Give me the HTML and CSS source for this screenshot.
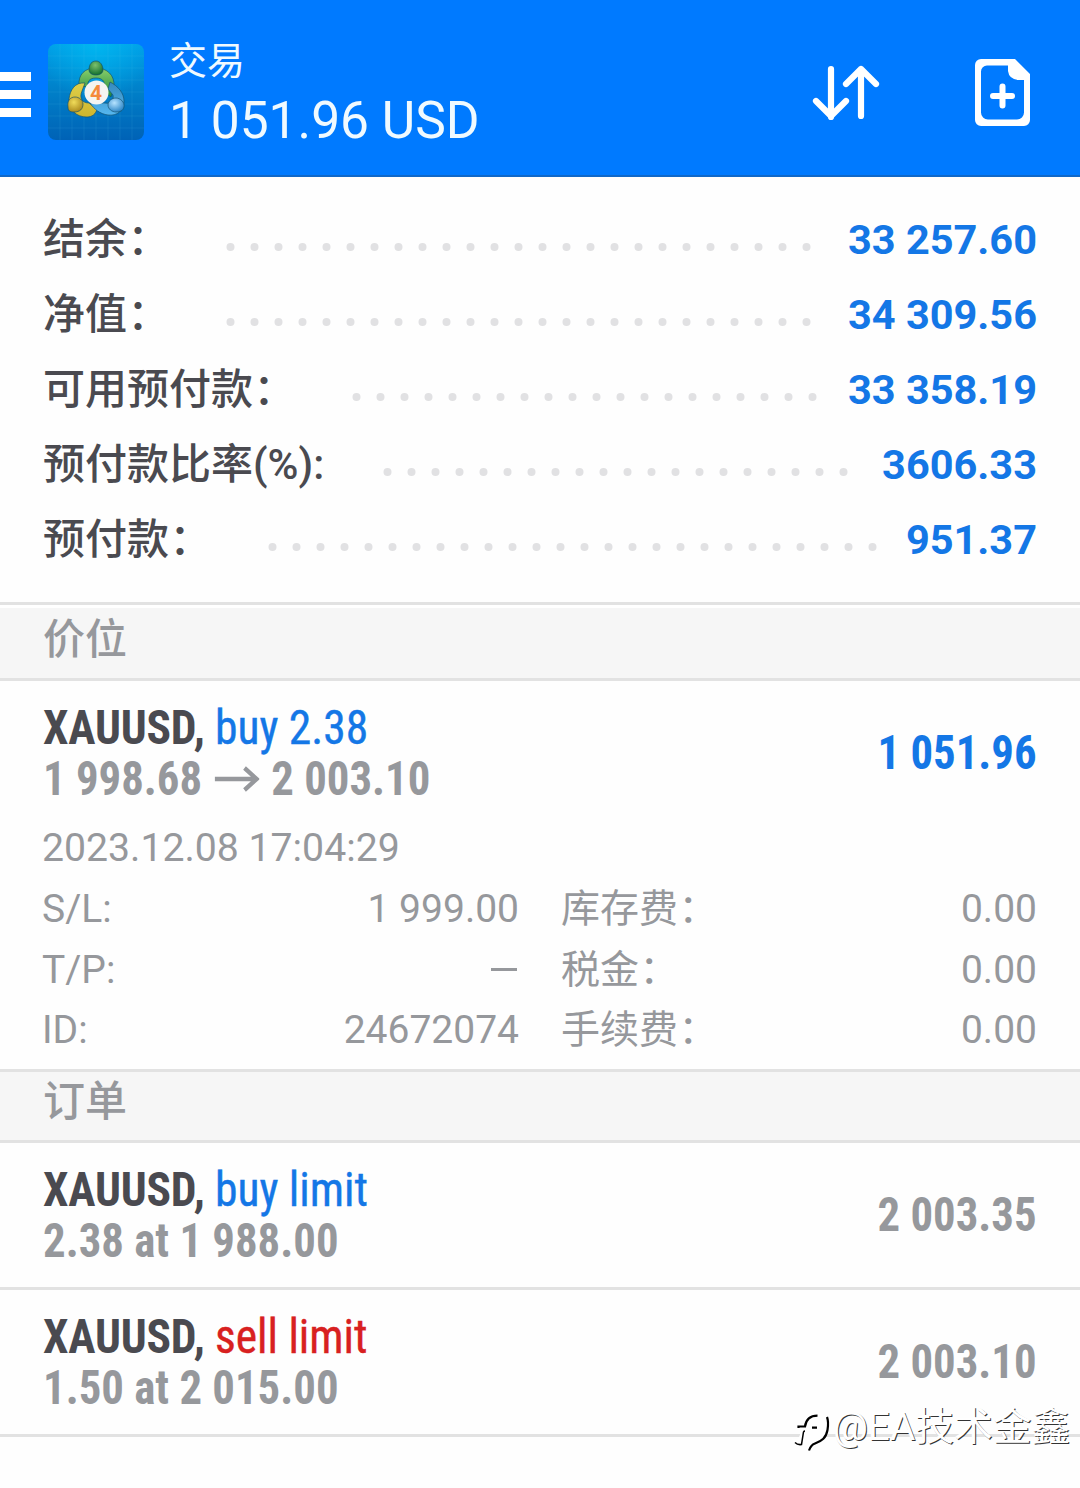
FILE: index.html
```
<!DOCTYPE html>
<html lang="zh-CN">
<head>
<meta charset="utf-8">
<title>交易</title>
<link rel="stylesheet" href="styles.css">
</head>
<body>
<header class="bar">
  <svg class="menu" width="31" height="48" viewBox="0 0 31 48"><path d="M0 0h31v9H0zM0 18h31v9H0zM0 36h31v9H0z" fill="#fff"/></svg>
  <svg class="logo" width="96" height="96" viewBox="0 0 96 96">
    <defs>
      <linearGradient id="bg" x1="0" y1="0" x2="0" y2="1"><stop offset="0" stop-color="#009ee6"/><stop offset=".5" stop-color="#007fc8"/><stop offset="1" stop-color="#0062b6"/></linearGradient>
      <radialGradient id="glow" cx=".5" cy="0" r=".6"><stop offset="0" stop-color="#00c0f5" stop-opacity=".7"/><stop offset="1" stop-color="#00c0f5" stop-opacity="0"/></radialGradient>
      <linearGradient id="gr" x1="0" y1="0" x2="0" y2="1"><stop offset="0" stop-color="#8bd06b"/><stop offset="1" stop-color="#20883c"/></linearGradient>
      <linearGradient id="ye" x1="0" y1="0" x2="0" y2="1"><stop offset="0" stop-color="#ddd04a"/><stop offset="1" stop-color="#d0b52c"/></linearGradient>
      <linearGradient id="bl" x1="0" y1="0" x2="0" y2="1"><stop offset="0" stop-color="#3589bd"/><stop offset="1" stop-color="#55b7f0"/></linearGradient>
      <radialGradient id="gh" cx=".45" cy=".3" r=".7"><stop offset="0" stop-color="#7cc06c"/><stop offset="1" stop-color="#12712f"/></radialGradient>
      <radialGradient id="yh" cx=".4" cy=".35" r=".7"><stop offset="0" stop-color="#f0dc5a"/><stop offset="1" stop-color="#a8861a"/></radialGradient>
      <radialGradient id="bh" cx=".4" cy=".35" r=".7"><stop offset="0" stop-color="#b6e3ff"/><stop offset="1" stop-color="#2581c4"/></radialGradient>
    </defs>
    <rect width="96" height="96" rx="8" fill="url(#bg)"/><rect width="96" height="96" rx="8" fill="url(#glow)"/>
    <path d="M12 0v96M24 0v96M36 0v96M48 0v96M60 0v96M72 0v96M84 0v96M0 12h96M0 24h96M0 36h96M0 48h96M0 60h96M0 72h96M0 84h96" stroke="#5cc4ef" stroke-opacity=".12" fill="none"/>
    <g stroke="#12506c" stroke-opacity=".65">
      <path d="M31 42C30 30 37 24 48 24s19 7 18 19l-3 10-8-6c3-8 1-13-7-13-7 0-9 4-8 9z" fill="url(#gr)"/>
      <path d="M37 39c-10-1-15 7-16 16 0 11 7 18 18 18 5 0 9-3 10-8l-8-6c-7 0-10-5-7-12z" fill="url(#ye)"/>
      <path d="M62 38c8 4 14 11 14 19 0 10-7 15-16 14-8-1-14-6-18-12h15c6 1 9-2 8-8l-5-6z" fill="url(#bl)"/>
      <path d="M41 26c0-6 3-9 7-9s7 4 7 9c0 3-3 5-7 5s-7-2-7-5z" fill="url(#gh)"/>
      <path d="M20 63c-1-6 2-10 7-10 4 0 8 3 8 7 0 5-3 8-9 8-4 0-6-1-6-5z" fill="url(#yh)"/>
      <path d="M60 61c0-4 4-7 8-7s9 4 8 9c-1 4-4 5-8 5s-8-3-8-7z" fill="url(#bh)"/>
    </g>
    <circle cx="48.500" cy="48.500" r="12" fill="#f4f4f2"/>
    <text class="logo-num" x="48" y="56" text-anchor="middle">4</text>
  </svg>
  <div class="title"><div class="t1">交易</div><div class="t2">1 051.96 USD</div></div>
  <svg class="sort" width="68" height="56" viewBox="0 0 68 56" fill="none" stroke="#fff" stroke-width="6.200" stroke-linecap="round" stroke-linejoin="round"><path d="M19 4v48M4 36l15 15 15-15M49 51V4M34 19L49 4l15 15"/></svg>
  <svg class="doc" width="56" height="68" viewBox="0 0 56 68"><path fill="#fff" fill-rule="evenodd" d="M6 0h34l15 15v46a6 6 0 0 1-6 6H6a6 6 0 0 1-6-6V6a6 6 0 0 1 6-6zM12 6.500a6 6 0 0 0-6 6v41a7 7 0 0 0 7 7h29a7 7 0 0 0 7-7V21h-6q-9-1-10-9V6.500z"/><path d="M27.500 27.500v19M18 37h19" stroke="#fff" stroke-width="6" stroke-linecap="round"/></svg>
</header>
<main>
<section class="summary">
  <div class="sum"><span class="lab">结余<i>：</i></span><svg class="dots" style="width:587px;margin-right:35px"><line x1="4.500" y1="5" x2="586" y2="5"/></svg><b>33 257.60</b></div>
  <div class="sum"><span class="lab">净值<i>：</i></span><svg class="dots" style="width:587px;margin-right:35px"><line x1="4.500" y1="5" x2="586" y2="5"/></svg><b>34 309.56</b></div>
  <div class="sum"><span class="lab">可用预付款<i>：</i></span><svg class="dots" style="width:466px;margin-right:30px"><line x1="4.500" y1="5" x2="465" y2="5"/></svg><b>33 358.19</b></div>
  <div class="sum"><span class="lab">预付款比率(%):</span><svg class="dots" style="width:466px;margin-right:33px"><line x1="4.500" y1="5" x2="465" y2="5"/></svg><b>3606.33</b></div>
  <div class="sum"><span class="lab">预付款<i>：</i></span><svg class="dots" style="width:611px;margin-right:27px"><line x1="4.500" y1="5" x2="609" y2="5"/></svg><b>951.37</b></div>
</section>
<h2 class="head first">价位</h2>
<section class="position">
  <div class="trade">
    <div><div class="sym"><b>XAUUSD,</b> <span class="buy">buy 2.38</span></div>
    <div class="price">1 998.68 <svg class="arrow" width="48" height="26" viewBox="0 0 48 26" fill="none" stroke="#96989c" stroke-width="4.500"><path d="M0 13h45M32 2l13 11-13 11"/></svg> 2 003.10</div></div>
    <div class="profit">1 051.96</div>
  </div>
  <div class="date">2023.12.08 17:04:29</div>
  <div class="grid">
    <span>S/L:</span><span class="num">1 999.00</span><span class="k">库存费<i>：</i></span><span class="num">0.00</span>
    <span>T/P:</span><span class="num"><span class="dash"></span></span><span class="k">税金<i>：</i></span><span class="num">0.00</span>
    <span>ID:</span><span class="num">24672074</span><span class="k">手续费<i>：</i></span><span class="num">0.00</span>
  </div>
</section>
<h2 class="head">订单</h2>
<section class="trade order"><div><div class="sym"><b>XAUUSD,</b> <span class="buy">buy limit</span></div><div class="price">2.38 at 1 988.00</div></div><div class="profit muted">2 003.35</div></section>
<section class="trade order"><div><div class="sym"><b>XAUUSD,</b> <span class="sell">sell limit</span></div><div class="price">1.50 at 2 015.00</div></div><div class="profit muted">2 003.10</div></section>
</main>
<div class="mark"><svg width="41" height="46" viewBox="0 0 41 46" fill="none"><path d="M0 27c6 4 8 0 9-10C11 5 19 0 28 2c8 2 9 9 7 17-2 9-7 12-14 14l-5 5 1-8-7 3c-6 2-9-1-10-6z" fill="#fff"/><g stroke="#000" stroke-width="2.200"><path d="M6.500 17v-1.500H13C14 8 18 4.600 25.500 4.600"/><path d="M13 20c-.500 0-1 0-1.500 1L9.500 33.500C6.500 34 4.500 33 3 31.500" stroke-width="1.500"/><path d="M35 6c1.500 4 1 10 .500 13-1.500 8-5.500 11-12.500 13.500-3 1-5 4-6 7M20 16.700h5"/></g></svg><span>@EA技术金鑫</span></div>
</body>
</html>
```
FILE: styles.css
```
* { box-sizing: border-box; }
body { margin: 0; width: 1080px; height: 1488px; overflow: hidden; position: relative; background: #fefefe; color: #96989c; font-family: Roboto, "Noto Sans CJK SC", sans-serif; }
svg { display: block; flex: none; }
i { font-style: normal; margin-left: .500px; }
.bar { height: 177px; background: #007aff; border-bottom: 2px solid #1068c8; display: flex; align-items: flex-start; color: #f0faff; }
.menu { margin-top: 72px; }
.logo { margin: 44px 0 0 17px; }
.logo-num { font: bold 21px Roboto, sans-serif; fill: #f58a3c; }
.title { margin: 37px 0 0 25px; width: 644px; }
.t1 { font-size: 38px; line-height: 48px; }
.t2 { font-size: 51.500px; line-height: 60px; margin-top: 6px; white-space: nowrap; }
.sort { margin: 65px 0 0 -1px; }
.doc { margin: 59px 0 0 95px; }
.summary { padding: 25px 43px 0; height: 425px; }
.sum { height: 75px; display: flex; align-items: center; font-size: 42px; line-height: 75px; white-space: nowrap; }
.lab { font-weight: 500; color: #4a4a50; margin: 0 auto 0 0; }
.sum b { font-weight: 700; font-size: 41.500px; color: #1477e6; }
.dots { height: 10px; margin-top: 15px; }
.dots line { stroke: #e1e1e3; stroke-width: 8; stroke-linecap: round; stroke-dasharray: 0 24; }
.head { margin: 0; height: 74px; padding-left: 43px; background: #f6f6f6; border: solid #e2e2e2; border-width: 3px 0; font-size: 42px; line-height: 60px; font-weight: 500; }
.first { height: 79px; line-height: 69px; box-shadow: inset 0 3px #fff; }
.position { height: 388px; }
.trade { height: 147px; padding: 21px 43px 0; display: flex; justify-content: space-between; white-space: nowrap; }
.sym, .price, .profit { font-family: "Roboto Condensed", Roboto, sans-serif; font-stretch: 75%; font-size: 48px; line-height: 51px; transform-origin: 0 50%; }
.sym { transform: scaleX(.948); }
.sym b { color: #4a4a50; letter-spacing: -.200px; }
.buy { color: #1477e6; }
.sell { color: #d82020; }
.buy, .sell { -webkit-text-stroke: .400px currentColor; }
.price, .profit { font-weight: 700; transform: scaleX(.933); }
.price { display: flex; gap: 13px; align-items: center; }
.profit { color: #1477e6; margin-top: 25px; height: 51px; transform-origin: 100% 50%; }
.muted { color: #96989c; }
.order { border-bottom: 3px solid #e2e2e2; }
.date { padding-left: 42px; margin-top: -7px; font-size: 39.200px; line-height: 54px; }
.grid { margin-top: 4px; padding: 0 43px 0 42px; display: grid; grid-template-columns: 151px 326px 260px 1fr; grid-auto-rows: 60.500px; font-size: 39px; line-height: 60px; }
.num { text-align: right; }
.k { padding-left: 42px; }
.dash { display: inline-block; width: 26px; height: 3px; margin-right: 2px; background: #96989c; vertical-align: 12px; }
.mark { position: absolute; left: 792px; top: 1411px; display: flex; color: #fff; font-size: 38.800px; line-height: 32px; white-space: nowrap; text-shadow: 1px 1px 0 #333; }
```
